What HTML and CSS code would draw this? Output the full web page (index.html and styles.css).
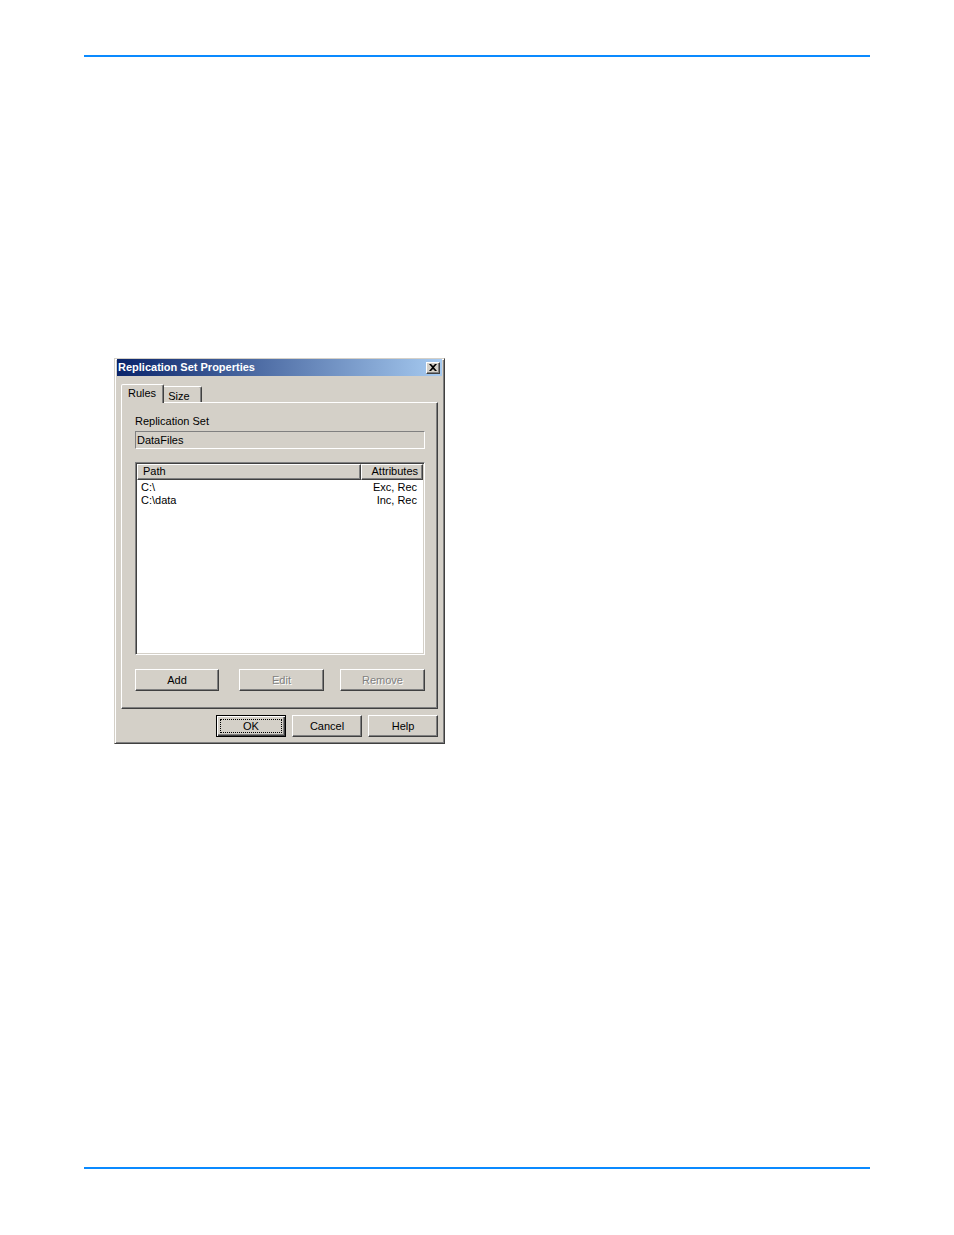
FILE: index.html
```html
<!DOCTYPE html>
<html>
<head>
<meta charset="utf-8">
<link rel="stylesheet" href="styles.css">
</head>
<body>
<div class="page">
  <div class="rule"></div>
  <div class="dialog">
    <div class="titlebar">
      <span class="title">Replication Set Properties</span>
      <span class="close"><svg width="8" height="7" viewBox="0 0 8 7"><path d="M0 0h2l2 2 2-2h2L5 3.5 8 7H6L4 5 2 7H0l3-3.5z" fill="#000"/></svg></span>
    </div>
    <div class="body">
      <div class="tabs">
        <div class="tab active">Rules</div>
        <div class="tab">Size</div>
      </div>
      <div class="panel">
        <div class="label">Replication Set</div>
        <div class="textbox">DataFiles</div>
        <div class="list">
          <div class="header">
            <div class="hcol path">Path</div>
            <div class="hcol attr">Attributes</div>
          </div>
          <div class="row"><span>C:\</span><span>Exc, Rec</span></div>
          <div class="row"><span>C:\data</span><span>Inc, Rec</span></div>
        </div>
        <div class="panel-buttons">
          <div class="btn add">Add</div>
          <div class="btn disabled edit">Edit</div>
          <div class="btn disabled remove">Remove</div>
        </div>
      </div>
      <div class="footer">
        <div class="btn default"><span class="focus">OK</span></div>
        <div class="btn">Cancel</div>
        <div class="btn">Help</div>
      </div>
    </div>
  </div>
  <div class="rule bottom"></div>
</div>
</body>
</html>
```
FILE: styles.css
```css
html, body { margin: 0; padding: 0; background: #fff; }
.page { padding: 55px 84px 0 84px; width: 786px; }
.rule { height: 2px; background: #0a8aff; }
.rule.bottom { margin-top: 423px; }
.dialog {
  margin: 301px 0 0 30px;
  width: 331px; height: 386px; box-sizing: border-box;
  background: #d4d0c8;
  border: 1px solid; border-color: #d4d0c8 #404040 #404040 #d4d0c8;
  box-shadow: inset 1px 1px 0 #fff, inset -1px -1px 0 #808080;
  padding: 0 2px 0 2px;
  font-family: "Liberation Sans", Arial, sans-serif; font-size: 11px; color: #000;
  display: flex; flex-direction: column;
}
.titlebar {
  height: 17px; display: flex; align-items: center; justify-content: space-between;
  background: linear-gradient(to right, #0a246a, #a6caf0);
  padding: 0 2px 0 1px;
}
.title { color: #fff; font-weight: bold; font-size: 11px; line-height: 13px; margin-top: -1px; }
.close {
  width: 14px; height: 12px; box-sizing: border-box; background: #d4d0c8;
  border: 1px solid; border-color: #fff #404040 #404040 #fff;
  box-shadow: inset -1px -1px 0 #808080;
  display: flex; align-items: center; justify-content: center;
}
.body { padding: 8px 4px 0 4px; display: flex; flex-direction: column; }
.tabs { display: flex; align-items: flex-end; height: 18px; padding-left: 1px; }
.tab {
  height: 16px; box-sizing: border-box; padding: 2px 5px 0 5px; line-height: 12px;
  border: 1px solid; border-bottom: none; border-color: #fff #404040 transparent #fff;
  border-radius: 2px 2px 0 0;
  box-shadow: inset -1px 0 0 #808080;
}
.tab.active { height: 19px; margin-bottom: -1px; position: relative; z-index: 1; background: #d4d0c8; padding: 2px 7px 0 6px; margin-left: -1px; }
.tab:not(.active) { margin-left: -2px; padding: 3px 11px 0 5px; }
.panel {
  width: 317px; height: 307px; box-sizing: border-box;
  border: 1px solid; border-color: #fff #404040 #404040 #fff;
  box-shadow: inset -1px -1px 0 #808080;
  padding: 12px 12px 0 13px;
  display: flex; flex-direction: column;
}
.label { height: 16px; line-height: 13px; }
.textbox {
  width: 290px; height: 18px; box-sizing: border-box; margin-top: 0;
  border: 1px solid; border-color: #808080 #fff #fff #808080;
  padding: 1px 1px; line-height: 14px;
}
.list {
  margin-top: 13px; width: 290px; height: 193px; box-sizing: border-box;
  background: #fff;
  border: 1px solid; border-color: #808080 #fff #fff #808080;
  box-shadow: inset 1px 1px 0 #404040, inset -1px -1px 0 #d4d0c8;
  padding: 1px;
}
.header { display: flex; height: 16px; }
.hcol {
  box-sizing: border-box; height: 16px; background: #d4d0c8; line-height: 13px;
  border: 1px solid; border-color: #fff #404040 #404040 #fff;
  box-shadow: inset -1px -1px 0 #808080;
}
.hcol.path { width: 224px; padding-left: 5px; }
.hcol.attr { width: 62px; text-align: right; padding-right: 4px; }
.row { display: flex; justify-content: space-between; height: 13px; line-height: 12px; padding: 0 6px 0 4px; }
.header + .row { margin-top: 1px; }
.panel-buttons { margin-top: 14px; width: 290px; display: flex; }
.btn {
  width: 85px; height: 22px; box-sizing: border-box; background: #d4d0c8;
  border: 1px solid; border-color: #fff #404040 #404040 #fff;
  box-shadow: inset -1px -1px 0 #808080;
  display: flex; align-items: center; justify-content: center;
}
.btn.add { width: 84px; }
.btn.edit { margin-left: 20px; }
.btn.remove { margin-left: 16px; }
.btn.disabled { color: #808080; text-shadow: 1px 1px 0 #fff; }
.footer { margin-top: 6px; display: flex; justify-content: flex-end; gap: 6px; padding-right: 0; }
.footer .btn { width: 70px; }
.btn.default { border: 1px solid #000; box-shadow: inset 1px 1px 0 #fff, inset -1px -1px 0 #404040, inset -2px -2px 0 #808080; padding: 3px; }
.focus { flex: 1; align-self: stretch; display: flex; align-items: center; justify-content: center; border: 1px dotted #000; }
```
